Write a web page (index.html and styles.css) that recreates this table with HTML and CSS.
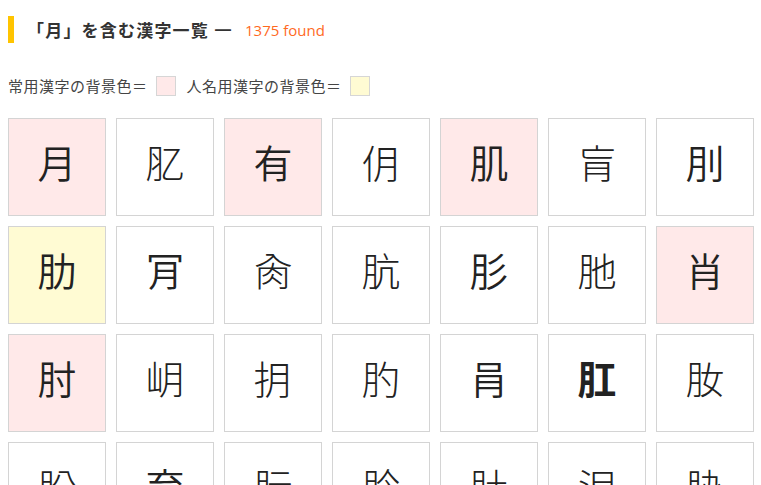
FILE: index.html
```html
<!DOCTYPE html>
<html lang="ja">
<head>
<meta charset="utf-8">
<title>「月」を含む漢字一覧</title>
<link rel="stylesheet" href="styles.css">
</head>
<body>
<h2 class="title"><span class="title-text">「月」を含む漢字一覧</span><span class="dash">—</span><span class="count">1375 found</span></h2>
<div class="legend">
  <span class="legend-label">常用漢字の背景色＝</span><span class="swatch joyo"></span>
  <span class="legend-label">人名用漢字の背景色＝</span><span class="swatch jinmei"></span>
</div>
<div class="grid">
  <div class="cell joyo">月</div>
  <div class="cell thin">肊</div>
  <div class="cell joyo">有</div>
  <div class="cell thin">仴</div>
  <div class="cell joyo">肌</div>
  <div class="cell thin">肓</div>
  <div class="cell">刖</div>

  <div class="cell jinmei">肋</div>
  <div class="cell">肎</div>
  <div class="cell thin">肏</div>
  <div class="cell thin">肮</div>
  <div class="cell">肜</div>
  <div class="cell thin">肔</div>
  <div class="cell joyo">肖</div>

  <div class="cell joyo">肘</div>
  <div class="cell thin">岄</div>
  <div class="cell thin">抈</div>
  <div class="cell thin">肑</div>
  <div class="cell">肙</div>
  <div class="cell bold">肛</div>
  <div class="cell thin">肗</div>

  <div class="cell thin">朌</div>
  <div class="cell">育</div>
  <div class="cell thin">朊</div>
  <div class="cell thin">肣</div>
  <div class="cell thin">肚</div>
  <div class="cell thin">泪</div>
  <div class="cell thin">胁</div>
</div>
</body>
</html>
```
FILE: styles.css
```css
html, body {
  margin: 0;
  padding: 0;
  background: #ffffff;
}
body {
  padding: 16px 8px 0 8px;
  font-family: "Noto Sans CJK JP", "Noto Sans", sans-serif;
  color: #333333;
  overflow: hidden;
  height: 485px;
  box-sizing: border-box;
}
.title {
  margin: 0;
  display: flex;
  align-items: center;
  height: 27px;
  border-left: 6px solid #ffc400;
  padding-left: 13px;
  font-size: 17px;
  font-weight: 700;
  letter-spacing: 1.2px;
  color: #333333;
}
.dash {
  font-family: "Liberation Sans", sans-serif;
  font-weight: 700;
  font-size: 16px;
  margin-left: 6px;
  margin-right: 14px;
  letter-spacing: 0;
}
.count {
  font-family: "Open Sans", "Noto Sans", sans-serif;
  font-weight: 400;
  font-size: 15px;
  letter-spacing: 0;
  color: #ff6a1e;
}
.legend {
  display: flex;
  align-items: center;
  margin-top: 32px;
  height: 21px;
  font-size: 15px;
  letter-spacing: 0.5px;
  color: #444444;
}
.swatch {
  display: inline-block;
  width: 20px;
  height: 20px;
  box-sizing: border-box;
  border: 1px solid #d6d6d6;
  margin-left: 8px;
  margin-right: 11px;
}
.swatch.joyo { background: #ffe9e9; }
.swatch.jinmei { background: #fffbd3; }
.grid {
  margin-top: 22px;
  display: grid;
  grid-template-columns: repeat(7, 98px);
  grid-auto-rows: 98px;
  gap: 10px;
}
.cell {
  box-sizing: border-box;
  border: 1px solid #d4d4d4;
  background: #ffffff;
  display: flex;
  align-items: center;
  justify-content: center;
  padding-bottom: 12px;
  font-size: 39px;
  font-weight: 350;
  color: #222222;
}
.cell.joyo { background: #ffe9e9; }
.cell.jinmei { background: #fffbd3; }
.cell.thin { font-weight: 300; }
.cell.bold { font-weight: 700; }
```
